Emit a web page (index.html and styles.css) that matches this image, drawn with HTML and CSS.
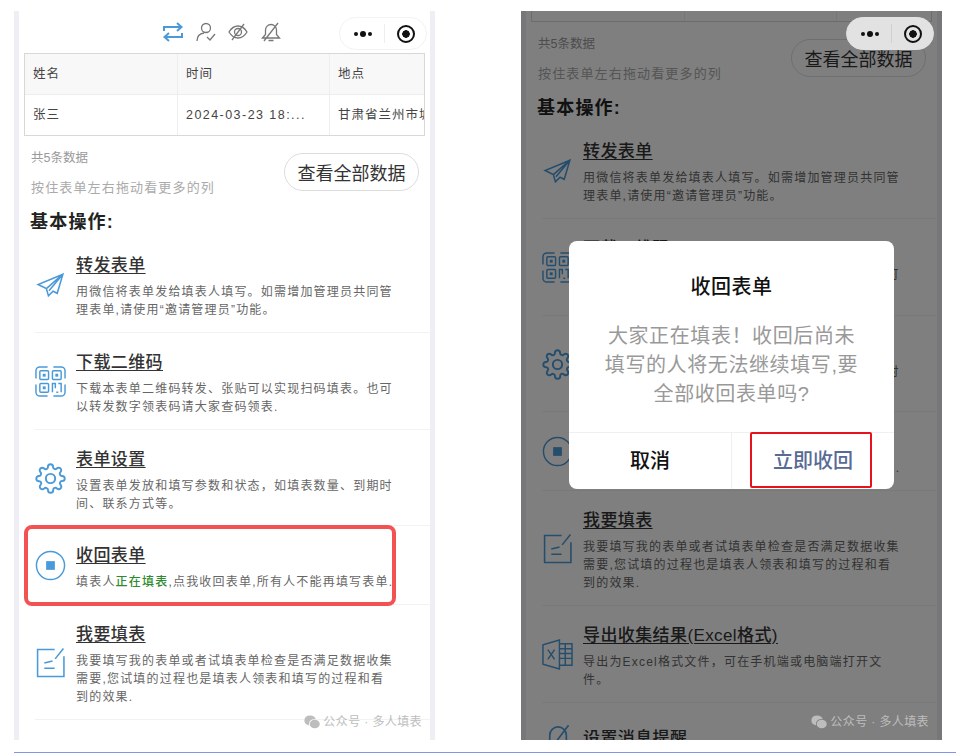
FILE: index.html
```html
<!DOCTYPE html>
<html lang="zh-CN">
<head>
    <meta charset="UTF-8">
    <title>收回表单</title>
    <link rel="stylesheet" href="styles.css">
</head>
<body>

<svg class="defs" width="0" height="0">
    <mask id="wechat-cut">
        <rect width="20" height="18" fill="#fff"/>
        <ellipse cx="13.500" cy="11.500" rx="7.500" ry="6.500" fill="#000"/>
    </mask>
    <symbol id="i-send" viewBox="-1 -3 30 30">
        <path d="M26 2 L2 12 L10 16 L12 23 L16.500 18.500 L20.500 20.500 Z M10 16 L26 2 L12.500 18"/>
    </symbol>
    <symbol id="i-qr" viewBox="0 0 32 32">
        <path d="M1 13 V5 a4 4 0 0 1 4 -4 H13 M19 1 H27 a4 4 0 0 1 4 4 V13 M31 19 V27 a4 4 0 0 1 -4 4 H19 M13 31 H5 a4 4 0 0 1 -4 -4 V19"/>
        <rect x="5" y="5" width="9" height="9" rx="1"/>
        <rect x="18" y="5" width="9" height="9" rx="1"/>
        <rect x="5" y="18" width="9" height="9" rx="1"/>
        <path d="M18 27 V18 H21 V23 M24 18 H27 V27 M22 27 H24"/>
        <rect class="solid" x="8" y="8" width="3" height="3"/>
        <rect class="solid" x="21" y="8" width="3" height="3"/>
        <rect class="solid" x="8" y="21" width="3" height="3"/>
    </symbol>
    <symbol id="i-gear" viewBox="0 0 24 24">
        <circle cx="12" cy="12" r="3.600"/>
        <path d="M19.400 15a1.650 1.650 0 0 0 .33 1.820l.06.06a2 2 0 0 1 0 2.830 2 2 0 0 1-2.830 0l-.06-.06a1.650 1.650 0 0 0-1.820-.33 1.650 1.650 0 0 0-1 1.510V21a2 2 0 0 1-2 2 2 2 0 0 1-2-2v-.09A1.650 1.650 0 0 0 9 19.400a1.650 1.650 0 0 0-1.820.33l-.06.06a2 2 0 0 1-2.830 0 2 2 0 0 1 0-2.830l.06-.06a1.650 1.650 0 0 0 .33-1.820 1.650 1.650 0 0 0-1.510-1H3a2 2 0 0 1-2-2 2 2 0 0 1 2-2h.09A1.650 1.650 0 0 0 4.600 9a1.650 1.650 0 0 0-.33-1.820l-.06-.06a2 2 0 0 1 0-2.830 2 2 0 0 1 2.830 0l.06.06a1.650 1.650 0 0 0 1.820.33H9a1.650 1.650 0 0 0 1-1.510V3a2 2 0 0 1 2-2 2 2 0 0 1 2 2v.09a1.650 1.650 0 0 0 1 1.510 1.650 1.650 0 0 0 1.820-.33l.06-.06a2 2 0 0 1 2.830 0 2 2 0 0 1 0 2.830l-.06.06a1.650 1.650 0 0 0-.33 1.820V9a1.650 1.650 0 0 0 1.510 1H21a2 2 0 0 1 2 2 2 2 0 0 1-2 2h-.09a1.650 1.650 0 0 0-1.510 1z"/>
    </symbol>
    <symbol id="i-stop" viewBox="0 0 32 32">
        <circle cx="16" cy="16" r="14.500"/>
        <rect class="solid" x="11.500" y="11.500" width="9" height="9"/>
    </symbol>
    <symbol id="i-edit" viewBox="0 0 28 30">
        <path d="M18 2.500 H1.500 V28.500 H27 V9 M18.500 11.500 L26.500 1.500 M8 15.500 L16 13.500 M8 20.500 H18"/>
    </symbol>
    <symbol id="i-excel" viewBox="0 0 32 32">
        <path d="M18 1 L1 6 V26 L18 31 Z M18 5 H31 V27 H18 M18 10 H31 M18 15 H31 M18 20 H31 M24 5 V27 M6 11 L13 21 M13 11 L6 21"/>
    </symbol>
    <symbol id="i-bell" viewBox="0 0 28 28">
        <path d="M3 22 L7 17 V11 a7.500 7.500 0 0 1 15 0 V17 L25 22 Z M11 25 H18 M24 2 L5 27"/>
    </symbol>
    <symbol id="i-wechat" viewBox="0 0 20 18">
        <ellipse class="solid" cx="7.500" cy="7" rx="7.500" ry="6.500" mask="url(#wechat-cut)"/>
        <ellipse class="solid" cx="13.500" cy="11.500" rx="6.500" ry="5.500"/>
    </symbol>
</svg>

<div class="page">
    <!-- 左边：表单管理页 -->
    <div class="phone">
        <div class="screen">
            <div class="toolbar">
                <svg class="tool tool-on" viewBox="0 0 20 20"><path d="M1 9 V5 H18 M14 1 L18.500 5 L14 9 M19 11 V15 H2 M6 11 L1.500 15 L6 19"/></svg>
                <svg class="tool" viewBox="0 0 20 20"><circle cx="10" cy="6" r="4.500"/><path d="M1 19 C1 14 4 11.500 8 11 M11 15 L14 18 L19 12"/></svg>
                <svg class="tool" viewBox="0 0 20 20"><path d="M1 10 C4 5 7 4 10 4 C13 4 16 5 19 10 C16 15 13 16 10 16 C7 16 4 15 1 10 Z"/><circle cx="10" cy="10" r="3.500"/><path d="M16 2 L4 18"/></svg>
                <svg class="tool" viewBox="0 0 20 20"><path d="M1.500 16 L4.500 12.500 V8 a5.500 5.500 0 0 1 11 0 V12.500 L18.500 16 Z M7.500 18.500 H12.500 M17 1 L3 19"/></svg>
            </div>

            <div class="table">
                <div class="cell cell-head">姓名</div>
                <div class="cell cell-head">时间</div>
                <div class="cell cell-head">地点</div>
                <div class="cell">张三</div>
                <div class="cell cell-time">2024-03-23 18:...</div>
                <div class="cell">甘肃省兰州市城关区</div>
            </div>

            <div class="summary">
                <div class="summary-text">
                    <p class="count">共5条数据</p>
                    <p class="hint">按住表单左右拖动看更多的列</p>
                </div>
                <button class="all-btn">查看全部数据</button>
            </div>

            <h2 class="section-title">基本操作:</h2>

            <ul class="actions">
                <li class="action">
                    <svg class="action-icon"><use href="#i-send"/></svg>
                    <div class="action-body">
                        <h3>转发表单</h3>
                        <p>用微信将表单发给填表人填写。如需增加管理员共同管理表单,请使用“邀请管理员”功能。</p>
                    </div>
                </li>
                <li class="action">
                    <svg class="action-icon"><use href="#i-qr"/></svg>
                    <div class="action-body">
                        <h3>下载二维码</h3>
                        <p>下载本表单二维码转发、张贴可以实现扫码填表。也可以转发数字领表码请大家查码领表.</p>
                    </div>
                </li>
                <li class="action action-short">
                    <svg class="action-icon"><use href="#i-gear"/></svg>
                    <div class="action-body">
                        <h3>表单设置</h3>
                        <p>设置表单发放和填写参数和状态，如填表数量、到期时间、联系方式等。</p>
                    </div>
                </li>
                <li class="action action-marked">
                    <svg class="action-icon"><use href="#i-stop"/></svg>
                    <div class="action-body">
                        <h3>收回表单</h3>
                        <p>填表人<b class="green">正在填表</b>,点我收回表单,所有人不能再填写表单.</p>
                    </div>
                </li>
                <li class="action">
                    <svg class="action-icon"><use href="#i-edit"/></svg>
                    <div class="action-body">
                        <h3>我要填表</h3>
                        <p>我要填写我的表单或者试填表单检查是否满足数据收集需要,您试填的过程也是填表人领表和填写的过程和看到的效果.</p>
                    </div>
                </li>
            </ul>
        </div>

        <div class="capsule">
            <span class="dots"><i></i><i></i><i></i></span>
            <span class="capsule-line"></span>
            <span class="target"></span>
        </div>
        <div class="watermark"><svg class="wechat"><use href="#i-wechat"/></svg>公众号 · 多人填表</div>
    </div>

    <!-- 右边：点击收回后的弹窗 -->
    <div class="phone phone-scrolled">
        <div class="screen">
            <div class="toolbar"></div>

            <div class="table">
                <div class="cell cell-head">姓名</div>
                <div class="cell cell-head">时间</div>
                <div class="cell cell-head">地点</div>
                <div class="cell">张三</div>
                <div class="cell cell-time">2024-03-23 18:...</div>
                <div class="cell">甘肃省兰州市城关区</div>
            </div>

            <div class="summary">
                <div class="summary-text">
                    <p class="count">共5条数据</p>
                    <p class="hint">按住表单左右拖动看更多的列</p>
                </div>
                <button class="all-btn">查看全部数据</button>
            </div>

            <h2 class="section-title">基本操作:</h2>

            <ul class="actions">
                <li class="action">
                    <svg class="action-icon"><use href="#i-send"/></svg>
                    <div class="action-body">
                        <h3>转发表单</h3>
                        <p>用微信将表单发给填表人填写。如需增加管理员共同管理表单,请使用“邀请管理员”功能。</p>
                    </div>
                </li>
                <li class="action">
                    <svg class="action-icon"><use href="#i-qr"/></svg>
                    <div class="action-body">
                        <h3>下载二维码</h3>
                        <p>下载本表单二维码转发、张贴可以实现扫码填表。也可以转发数字领表码请大家查码领表.</p>
                    </div>
                </li>
                <li class="action action-short">
                    <svg class="action-icon"><use href="#i-gear"/></svg>
                    <div class="action-body">
                        <h3>表单设置</h3>
                        <p>设置表单发放和填写参数和状态，如填表数量、到期时间、联系方式等。</p>
                    </div>
                </li>
                <li class="action">
                    <svg class="action-icon"><use href="#i-stop"/></svg>
                    <div class="action-body">
                        <h3>收回表单</h3>
                        <p>填表人<b class="green">正在填表</b>,点我收回表单,所有人不能再填写表单.</p>
                    </div>
                </li>
                <li class="action">
                    <svg class="action-icon"><use href="#i-edit"/></svg>
                    <div class="action-body">
                        <h3>我要填表</h3>
                        <p>我要填写我的表单或者试填表单检查是否满足数据收集需要,您试填的过程也是填表人领表和填写的过程和看到的效果.</p>
                    </div>
                </li>
                <li class="action">
                    <svg class="action-icon"><use href="#i-excel"/></svg>
                    <div class="action-body">
                        <h3>导出收集结果(Excel格式)</h3>
                        <p>导出为Excel格式文件，可在手机端或电脑端打开文<br>件。</p>
                    </div>
                </li>
                <li class="action">
                    <svg class="action-icon"><use href="#i-bell"/></svg>
                    <div class="action-body">
                        <h3>设置消息提醒</h3>
                    </div>
                </li>
            </ul>
        </div>

        <div class="mask"></div>
        <div class="capsule capsule-light">
            <span class="dots"><i></i><i></i><i></i></span>
            <span class="capsule-line"></span>
            <span class="target"></span>
        </div>

        <div class="dialog">
            <div class="dialog-title">收回表单</div>
            <div class="dialog-text">大家正在填表！收回后尚未填写的人将无法继续填写,要全部收回表单吗?</div>
            <div class="dialog-btns">
                <div class="dialog-btn">取消</div>
                <div class="dialog-btn dialog-ok">立即收回</div>
            </div>
        </div>
        <div class="watermark"><svg class="wechat"><use href="#i-wechat"/></svg>公众号 · 多人填表</div>
    </div>
</div>

<div class="bottom-line"></div>

</body>
</html>
```

FILE: styles.css
```css
*, *::after {
    box-sizing: border-box;
}
body {
    margin: 0;
    background-color: #fff;
    color: #333;
    font-family: "Liberation Sans", "Noto Sans CJK SC", sans-serif;
    overflow: hidden;
}
p, h2, h3, ul {
    margin: 0;
    padding: 0;
}
.defs {
    position: absolute;
}
.page {
    display: flex;
    gap: 86px;
    padding: 11px 0 0 14px;
}
.bottom-line {
    height: 1px;
    margin: 12px 0 0 14px;
    background-color: #8097e6;
}

/* 手机框 */
.phone {
    position: relative;
    width: 421px;
    height: 729px;
    overflow: hidden;
    background-color: #eeeef4;
}
.screen {
    margin: 0 5px;
    min-height: 900px;
    background-color: #fff;
}
.phone-scrolled .screen {
    margin-top: -114px;
}

.toolbar {
    height: 42px;
    display: flex;
    align-items: center;
    gap: 12.500px;
    padding-left: 144px;
}
.tool {
    width: 20px;
    height: 20px;
    fill: none;
    stroke: #777;
    stroke-width: 1.300;
}
.tool-on {
    stroke: #4a9ad9;
    stroke-width: 2;
}

/* 数据表格 */
.table {
    margin: 0 5px;
    height: 83px;
    display: grid;
    grid-template-columns: 153px 152px 1fr;
    grid-template-rows: 41px 40px;
    border: 1.500px solid #d8d8d8;
    overflow: hidden;
}
.cell {
    padding: 0 8px;
    line-height: 40px;
    font-size: 12.500px;
    letter-spacing: 1px;
    color: #444;
    white-space: nowrap;
    overflow: hidden;
    border-right: 1px solid #eee;
}
.cell-time {
    letter-spacing: 1.450px;
}
.cell-head {
    background-color: #f8f8f8;
    border-bottom: 1px solid #eee;
}
.cell:nth-child(3n) {
    border-right: none;
}

.summary {
    display: flex;
    justify-content: space-between;
    padding: 12px 11px 0 12px;
}
.count {
    font-size: 12.500px;
    line-height: 20px;
    color: #999;
    margin-bottom: 10px;
}
.hint {
    font-size: 13px;
    letter-spacing: 1.150px;
    line-height: 20px;
    color: #aaa;
}
.all-btn {
    width: 135px;
    height: 38px;
    margin-top: 5px;
    padding: 0;
    border: 1px solid #ddd;
    border-radius: 19px;
    background-color: #fff;
    color: #333;
    font-family: inherit;
    font-size: 18px;
}
.section-title {
    margin: 11px 0 0 11px;
    font-size: 18px;
    line-height: 26px;
    letter-spacing: 1.200px;
    font-weight: bold;
    color: #222;
}

/* 操作列表 */
.actions {
    list-style: none;
    margin: 1px 0 0 16px;
}
.action {
    position: relative;
    display: flex;
    align-items: center;
    gap: 10px;
    padding: 20px 0 13px;
    border-bottom: 1px solid #f2f2f2;
}
.action-short {
    padding-bottom: 12px;
}
.action-icon {
    flex: none;
    width: 31px;
    height: 31px;
    margin-bottom: 7px;
    fill: none;
    color: #4a9ad9;
    stroke: currentColor;
    stroke-width: 1.500;
}
.solid {
    fill: currentColor;
    stroke: none;
}
.action-body {
    width: 318px;
}
.action h3 {
    font-size: 17px;
    font-weight: 500;
    line-height: 20px;
    letter-spacing: .4px;
    color: #333;
    text-decoration: underline;
    text-underline-offset: 2px;
    margin-bottom: 7px;
}
.action p {
    font-size: 12px;
    line-height: 18px;
    letter-spacing: 1.200px;
    color: #666;
}
.green {
    color: #2e8b2e;
    font-weight: 500;
}
.action-marked::after {
    content: "";
    position: absolute;
    left: -11px;
    top: -1px;
    width: 372px;
    height: 81px;
    border: 4px solid #f25252;
    border-radius: 8px;
}

/* 右上角胶囊 */
.capsule {
    position: absolute;
    top: 6px;
    left: 325px;
    width: 88px;
    height: 33px;
    display: flex;
    align-items: center;
    border: 1px solid #f2f2f2;
    border-radius: 17px;
    background-color: #fff;
}
.capsule-light {
    background-color: #e2e2e2;
    border-color: #e2e2e2;
}
.dots {
    width: 43px;
    display: flex;
    align-items: center;
    justify-content: center;
    gap: 2px;
    margin-left: 1px;
}
.dots i {
    width: 4px;
    height: 4px;
    border-radius: 50%;
    background-color: #111;
}
.dots i:nth-child(2) {
    width: 6px;
    height: 6px;
}
.capsule-line {
    width: 1px;
    height: 19px;
    background-color: #eee;
}
.capsule-light .capsule-line {
    background-color: #d0d0d0;
}
.target {
    width: 18px;
    height: 18px;
    margin-left: 12px;
    border: 2px solid #111;
    border-radius: 50%;
    background: radial-gradient(circle, #111 0 3.500px, transparent 4px);
}

.watermark {
    position: absolute;
    top: 703px;
    right: 13px;
    display: flex;
    align-items: center;
    gap: 3px;
    font-size: 12px;
    line-height: 16px;
    letter-spacing: .4px;
    color: #bdbdbd;
}
.wechat {
    width: 16px;
    height: 14px;
    color: #bdbdbd;
}

/* 弹窗 */
.mask {
    position: absolute;
    inset: 0;
    background-color: rgba(0, 0, 0, .5);
}
.dialog {
    position: absolute;
    top: 230px;
    left: 48px;
    width: 325px;
    height: 248px;
    border-radius: 8px;
    background-color: #fff;
    text-align: center;
    overflow: hidden;
}
.dialog-title {
    padding-top: 32px;
    font-size: 20px;
    line-height: 28px;
    letter-spacing: .5px;
    font-weight: 500;
    color: #111;
}
.dialog-text {
    margin-top: 21px;
    padding: 0 34px;
    height: 110px;
    font-size: 20px;
    line-height: 29px;
    letter-spacing: .6px;
    color: #999;
}
.dialog-btns {
    height: 57px;
    display: flex;
    border-top: 1px solid #f0f0f0;
}
.dialog-btn {
    position: relative;
    flex: 1;
    line-height: 56px;
    font-size: 20px;
    font-weight: 500;
    color: #111;
}
.dialog-ok {
    border-left: 1px solid #f0f0f0;
    color: #576b95;
}
.dialog-ok::after {
    content: "";
    position: absolute;
    top: -1px;
    left: 18px;
    width: 122px;
    height: 56px;
    border: 2px solid #e8121c;
    border-radius: 2px;
}
```
